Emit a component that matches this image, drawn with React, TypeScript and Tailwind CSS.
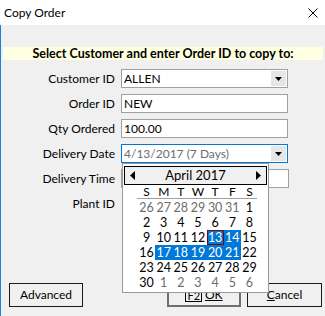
import { ReactNode } from 'react';

const weeks: { d: number; muted?: boolean }[][] = [
  [{ d: 26, muted: true }, { d: 27, muted: true }, { d: 28, muted: true }, { d: 29, muted: true }, { d: 30, muted: true }, { d: 31, muted: true }, { d: 1 }],
  [{ d: 2 }, { d: 3 }, { d: 4 }, { d: 5 }, { d: 6 }, { d: 7 }, { d: 8 }],
  [{ d: 9 }, { d: 10 }, { d: 11 }, { d: 12 }, { d: 13 }, { d: 14 }, { d: 15 }],
  [{ d: 16 }, { d: 17 }, { d: 18 }, { d: 19 }, { d: 20 }, { d: 21 }, { d: 22 }],
  [{ d: 23 }, { d: 24 }, { d: 25 }, { d: 26 }, { d: 27 }, { d: 28 }, { d: 29 }],
  [{ d: 30 }, { d: 1, muted: true }, { d: 2, muted: true }, { d: 3, muted: true }, { d: 4, muted: true }, { d: 5, muted: true }, { d: 6, muted: true }],
];

const selected = [13, 14, 17, 18, 19, 20, 21];

function Row({ label, children }: { label: string; children: ReactNode }) {
  return (
    <div className="flex items-center h-[19px]">
      <div className="w-[115px] text-right pr-[1px] leading-[19px]">{label}</div>
      <div className="ml-[5px]">{children}</div>
    </div>
  );
}

function DropArrow() {
  return (
    <div className="absolute right-[1px] top-[1px] bottom-[1px] w-[15px] bg-[#e6e6e6] flex items-center justify-center">
      <svg width="7" height="4" viewBox="0 0 7 4">
        <path d="M0 0 H7 L3.5 4 Z" fill="#000" />
      </svg>
    </div>
  );
}

function Calendar() {
  return (
    <div className="absolute left-[122px] top-[163px] w-[147px] h-[130px] bg-white border border-[#9a9a9a] pt-[2px] pl-[1px]">
      <div className="w-[143px] h-[19px] border border-black bg-[#f0f0f0] flex items-center justify-between px-[5px]">
        <svg width="5" height="9" viewBox="0 0 5 9">
          <path d="M5 0 V9 L0 4.5 Z" fill="#000" />
        </svg>
        <span className="leading-[17px] text-[13px]">April 2017</span>
        <svg width="5" height="9" viewBox="0 0 5 9">
          <path d="M0 0 V9 L5 4.5 Z" fill="#000" />
        </svg>
      </div>
      <div className="ml-[13px] w-[120px] h-[14px] border-b border-[#a0a0a0] grid grid-cols-[repeat(7,17.15px)] pl-[1px] leading-[13px]">
        {['S', 'M', 'T', 'W', 'T', 'F', 'S'].map((d, i) => (
          <div key={i} className="text-center">{d}</div>
        ))}
      </div>
      <div className="ml-[14px] mt-[1px] grid grid-cols-[repeat(7,17.15px)] text-[12.5px]">
        {weeks.flat().map((c, i) => {
          const sel = !c.muted && selected.includes(c.d);
          const today = !c.muted && c.d === 13;
          return (
            <div
              key={i}
              className={
                'h-[15px] leading-[15px] text-center ' +
                (sel ? 'bg-[#0078d7] text-white ' : c.muted ? 'text-[#6d6d6d] ' : 'text-black ') +
                (today ? 'outline outline-1 -outline-offset-1 outline-[#8b0000]' : '')
              }
            >
              {c.d}
            </div>
          );
        })}
      </div>
    </div>
  );
}

export default function App() {
  return (
    <div className="relative w-[325px] h-[316px] bg-[#f0f0f0] text-[12px] text-black font-['Lato','Noto_Sans',sans-serif] overflow-hidden">
      <div className="h-[25px] bg-white flex items-center justify-between pl-[4px] pr-[7px]">
        <span className="leading-[25px]">Copy Order</span>
        <svg width="10" height="10" viewBox="0 0 10 10">
          <path d="M0.5 0.5 L9.5 9.5 M9.5 0.5 L0.5 9.5" stroke="#000" strokeWidth="1" />
        </svg>
      </div>
      <div className="border-l border-[#1883d7] h-[291px] flex flex-col">
        <div className="mt-[22px] mx-[2px] h-[13px] bg-[#ffffe1] text-center font-bold text-[12.5px] leading-[13px] whitespace-nowrap">
          Select Customer and enter Order ID to copy to:
        </div>
        <div className="mt-[9px] flex flex-col gap-[6px]">
          <Row label="Customer ID">
            <div className="relative w-[167px] h-[19px] bg-white border border-[#a0a0a0] pl-[2px] leading-[17px]">
              ALLEN
              <DropArrow />
            </div>
          </Row>
          <Row label="Order ID">
            <div className="w-[167px] h-[19px] bg-white border border-[#a0a0a0] pl-[2px] leading-[17px]">NEW</div>
          </Row>
          <Row label="Qty Ordered">
            <div className="w-[167px] h-[19px] bg-white border border-[#a0a0a0] pl-[2px] leading-[17px]">100.00</div>
          </Row>
          <Row label="Delivery Date">
            <div className="relative w-[167px] h-[19px] bg-white border border-[#0078d7] pl-[2px] leading-[17px] text-[#6d6d6d]">
              4/13/2017 (7 Days)
              <DropArrow />
            </div>
          </Row>
          <Row label="Delivery Time">
            <div className="w-[168px] h-[19px] bg-white border border-[#a0a0a0]" />
          </Row>
          <Row label="Plant ID">
            <div className="w-[140px] h-[19px]" />
          </Row>
        </div>
        <div className="mt-[70px] flex items-center">
          <div className="ml-[8px] w-[74px] h-[24px] border border-[#1a1a1a] flex items-center justify-center">Advanced</div>
          <div className="ml-[84px] w-[74px] h-[24px] border-2 border-[#6e6e6e] flex items-center justify-center gap-[3px]">
            <span className="border border-black px-[1px] leading-[11px] text-[11px]">F2</span>
            <span className="underline">OK</span>
          </div>
          <div className="ml-[6px] w-[75px] h-[24px] border border-[#1a1a1a] flex items-center justify-center">
            <span><span className="underline">C</span>ancel</span>
          </div>
        </div>
      </div>
      <Calendar />
    </div>
  );
}
